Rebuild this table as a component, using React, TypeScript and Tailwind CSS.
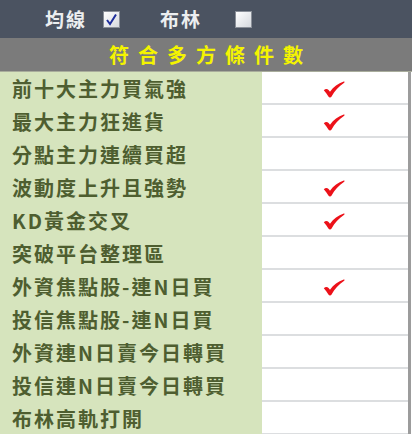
import React from "react";

const rows: { label: string; hit: boolean }[] = [
  { label: "前十大主力買氣強", hit: true },
  { label: "最大主力狂進貨", hit: true },
  { label: "分點主力連續買超", hit: false },
  { label: "波動度上升且強勢", hit: true },
  { label: "KD黃金交叉", hit: true },
  { label: "突破平台整理區", hit: false },
  { label: "外資焦點股-連N日買", hit: true },
  { label: "投信焦點股-連N日買", hit: false },
  { label: "外資連N日賣今日轉買", hit: false },
  { label: "投信連N日賣今日轉買", hit: false },
  { label: "布林高軌打開", hit: false },
];

function Tick() {
  return (
    <svg width="22" height="17" viewBox="0 0 22 17">
      <path
        d="M0.8 9.2 C2.5 7.6 4.2 7.6 5.6 9 L7 10.8 C10.5 6 15 2.4 20.8 0.6 C21.6 0.5 21.8 1.3 21.2 1.8 C15.6 5.4 11.6 10 8.6 15.6 C7.8 16.8 6.2 16.8 5.4 15.6 C4 13.2 2.6 11.2 0.8 9.2 Z"
        fill="#ec1119"
      />
    </svg>
  );
}

function Box({ checked }: { checked: boolean }) {
  return (
    <div className="w-[17px] h-[17px] border border-[#8a8f98] bg-gradient-to-br from-[#ffffff] to-[#d6d9de] flex items-center justify-center">
      {checked && (
        <svg width="13" height="13" viewBox="0 0 13 13">
          <path d="M2 7 L5 11 L11 1.5" stroke="#1f2f9c" strokeWidth="2" fill="none" />
        </svg>
      )}
    </div>
  );
}

export default function App() {
  return (
    <div
      className="w-[412px] h-[434px] overflow-hidden bg-white"
      style={{ fontFamily: '"Noto Sans CJK TC", "Noto Sans", sans-serif' }}
    >
      <div className="h-[38px] bg-[#4b5361] flex items-center text-[#eceef0] text-[19px] font-bold">
        <span className="ml-[45px] tracking-[2px]">均線</span>
        <div className="ml-[16px]">
          <Box checked />
        </div>
        <span className="ml-[40px] tracking-[2px]">布林</span>
        <div className="ml-[33px]">
          <Box checked={false} />
        </div>
      </div>
      <div className="h-[34px] bg-[#7b7b7b] flex items-center justify-center border-b border-[#a9ad9c]">
        <span className="text-[#f4f400] text-[20px] font-bold tracking-[9px] pl-[9px] leading-none">
          符合多方條件數
        </span>
      </div>
      <div className="flex">
        <div className="w-[262px] bg-[#d6e4bd] flex flex-col">
          {rows.map((r) => (
            <div
              key={r.label}
              className="h-[33px] flex items-center pl-[12px] text-[20px] font-bold tracking-[2px] text-[#4e5e30]"
            >
              {r.label}
            </div>
          ))}
        </div>
        <div className="w-[146px] flex flex-col bg-white">
          {rows.map((r) => (
            <div
              key={r.label}
              className="h-[33px] border-b-2 border-[#dcdee0] flex items-center justify-center pr-[2px] pt-[3px]"
            >
              {r.hit && <Tick />}
            </div>
          ))}
        </div>
        <div className="w-[3px] bg-[#9c9c9c]" />
        <div className="w-[1px] bg-white" />
      </div>
    </div>
  );
}
